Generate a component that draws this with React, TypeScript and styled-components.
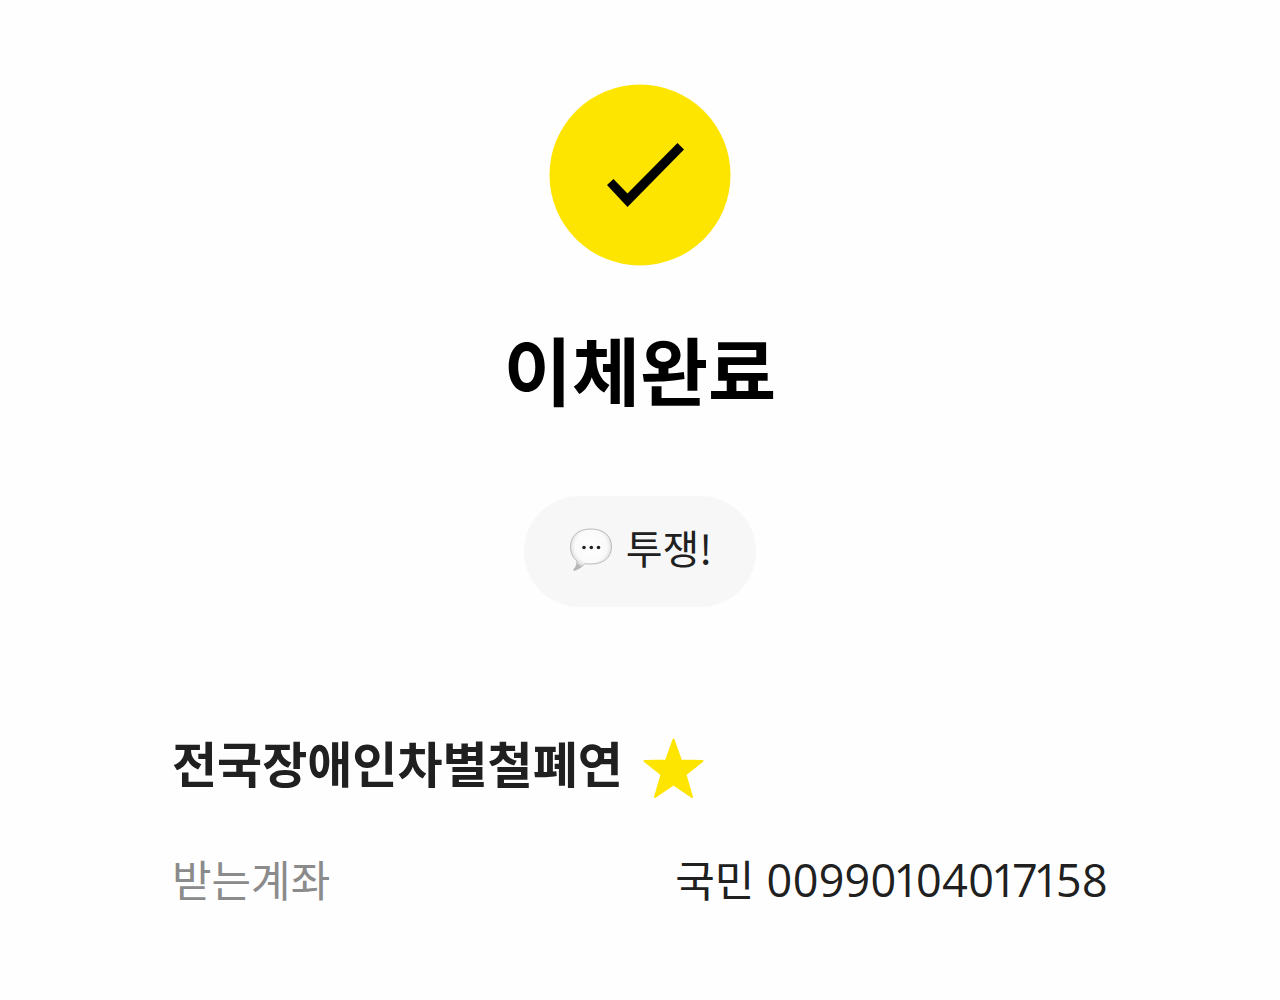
import styled, { createGlobalStyle } from "styled-components";

const GlobalStyle = createGlobalStyle`
  * { box-sizing: border-box; margin: 0; }
  body {
    background: #fefefe;
    color: #202020;
    font-family: "Noto Sans CJK KR", sans-serif;
  }
`;

const Page = styled.main`
  display: flex;
  flex-direction: column;
  align-items: center;
  padding: 84px 172px 88px;
`;

const Badge = styled.svg`
  display: block;
  width: 182px;
  height: 182px;
`;

const Title = styled.h1`
  margin-top: 54px;
  color: #000;
  font-size: 74px;
  font-weight: 700;
  line-height: 96px;
`;

const Message = styled.p`
  display: flex;
  align-items: flex-start;
  gap: 12px;
  margin-top: 80px;
  padding: 30px 44px 35px;
  border-radius: 56px;
  background: #f7f7f7;
  font-size: 40px;
  line-height: 42px;
`;

const Bubble = styled.svg`
  width: 46px;
  height: 46px;
`;

const Details = styled.section`
  align-self: stretch;
  margin-top: 118px;
`;

const Recipient = styled.h2`
  display: flex;
  align-items: flex-end;
  gap: 20px;
  font-size: 49px;
  font-weight: 700;
  line-height: 74px;
`;

const Star = styled.svg`
  width: 62px;
  height: 62px;
`;

const Row = styled.dl`
  display: flex;
  justify-content: space-between;
  align-items: baseline;
  margin-top: 49px;
  font-size: 43px;
  line-height: 60px;
`;

const Label = styled.dt`
  color: #8b8b8b;
`;

const Value = styled.dd`
  display: flex;
  align-items: baseline;
  gap: 12px;
`;

const Digits = styled.span`
  font-family: "Open Sans", "Noto Sans CJK KR", sans-serif;
  font-size: 45px;
  font-variant-numeric: proportional-nums;
`;

export default function App() {
  return (
    <>
      <GlobalStyle />
      <Page>
        <Badge viewBox="0 0 182 182" aria-hidden="true">
          <circle cx="91" cy="91" r="90.5" fill="#fde500" />
          <path d="M58 101L64.5 95L78.500 109.500L128.500 59L135 65.500L78.500 123Z" fill="#000" />
        </Badge>
        <Title>이체완료</Title>
        <Message>
          <Bubble viewBox="0 0 46 46" aria-hidden="true">
            <defs>
              <radialGradient id="bubble-fill" cx="50%" cy="42%" r="56%">
                <stop offset="0" stopColor="#fff" />
                <stop offset="0.7" stopColor="#fafafa" />
                <stop offset="0.88" stopColor="#e2e2e2" />
                <stop offset="1" stopColor="#b4b4b4" />
              </radialGradient>
            </defs>
            <path
              d="M23 3C36 3 43.5 10 43.5 20.500C43.500 32 35 38 23 38C20.500 38 18.500 38 17 37.500C14 41 10 43.500 6 44.500C5.500 44 5.500 43.500 6 43C8 41 9 38.500 9 35C5 32 2.500 27 2.500 20.500C2.500 10 10 3 23 3Z"
              fill="url(#bubble-fill)"
              stroke="#bcbcbc"
            />
            <circle cx="16" cy="21.500" r="1.800" fill="#222" />
            <circle cx="23.300" cy="21.500" r="1.800" fill="#222" />
            <circle cx="30.500" cy="21.500" r="1.800" fill="#222" />
          </Bubble>
          <span>투쟁!</span>
        </Message>
        <Details>
          <Recipient>
            <span>전국장애인차별철폐연</span>
            <Star viewBox="0 0 62 62" aria-hidden="true">
              <path
                d="M30.500 2.500L38 23.500L59.500 24L42.500 37.500L49 60L30.500 47.500L12 60L18.500 37.500L1.500 24L23 23.500Z"
                fill="#fde500"
                stroke="#fde500"
                strokeWidth="2"
                strokeLinejoin="round"
              />
            </Star>
          </Recipient>
          <Row>
            <Label>받는계좌</Label>
            <Value>
              <span>국민</span>
              <Digits>00990104017158</Digits>
            </Value>
          </Row>
        </Details>
      </Page>
    </>
  );
}
